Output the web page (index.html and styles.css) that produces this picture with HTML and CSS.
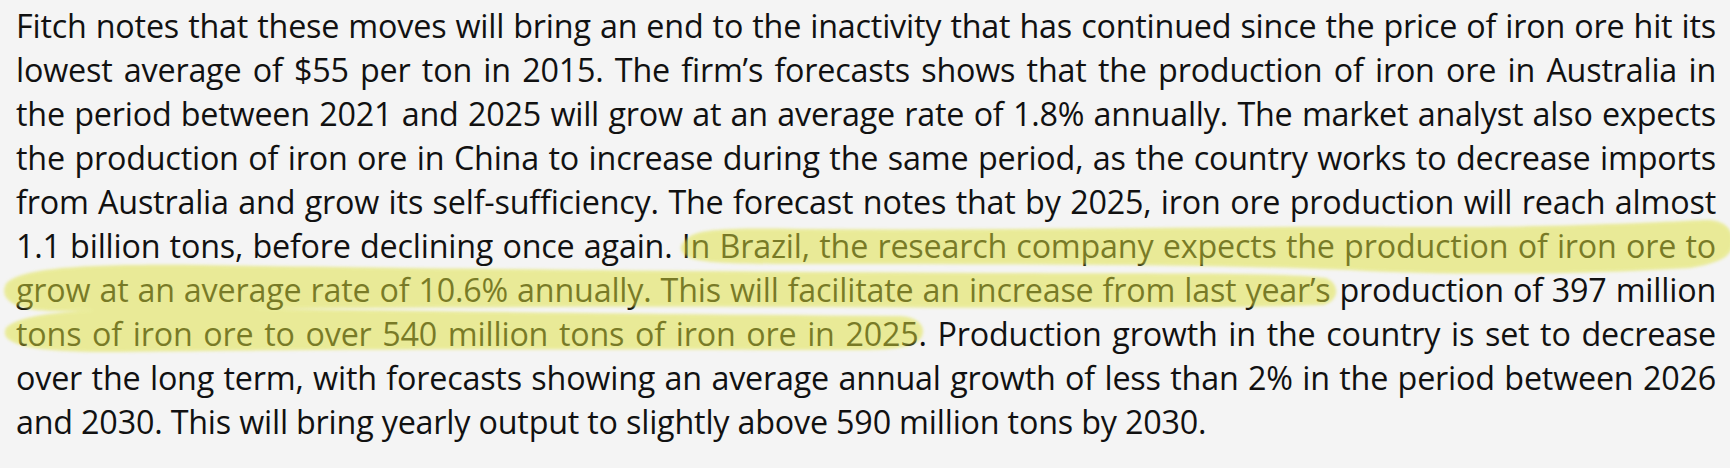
FILE: index.html
```html
<!DOCTYPE html>
<html lang="en">
<head>
<meta charset="utf-8">
<title>Iron ore forecast</title>
<link rel="stylesheet" href="styles.css">
</head>
<body>
<main class="panel">
  <div class="text">
    <p class="line">Fitch notes that these moves will bring an end to the inactivity that has continued since the price of iron ore hit its</p>
    <p class="line">lowest average of $55 per ton in 2015. The firm’s forecasts shows that the production of iron ore in Australia in</p>
    <p class="line">the period between 2021 and 2025 will grow at an average rate of 1.8% annually. The market analyst also expects</p>
    <p class="line">the production of iron ore in China to increase during the same period, as the country works to decrease imports</p>
    <p class="line">from Australia and grow its self-sufficiency. The forecast notes that by 2025, iron ore production will reach almost</p>
    <p class="line">1.1 billion tons, before declining once again. In Brazil, the research company expects the production of iron ore to</p>
    <p class="line">grow at an average rate of 10.6% annually. This will facilitate an increase from last year’s production of 397 million</p>
    <p class="line">tons of iron ore to over 540 million tons of iron ore in 2025. Production growth in the country is set to decrease</p>
    <p class="line">over the long term, with forecasts showing an average annual growth of less than 2% in the period between 2026</p>
    <p class="line last">and 2030. This will bring yearly output to slightly above 590 million tons by 2030.</p>
    <svg class="marker" width="1730" height="468" viewBox="0 0 1730 468" aria-hidden="true">
      <defs>
        <filter id="soft" x="-5%" y="-50%" width="110%" height="200%">
          <feGaussianBlur stdDeviation="1.8"/>
        </filter>
      </defs>
      <g class="ink" filter="url(#soft)" transform="translate(0 2)">
        <path d="M 688 236 C 698 226, 740 226, 800 227 C 1000 229, 1200 224, 1400 225 C 1550 226, 1660 220, 1705 218 C 1728 217, 1736 232, 1732 246 C 1728 258, 1712 262, 1690 266 C 1600 272, 1450 274, 1350 268 C 1200 262, 1000 262, 800 262 C 740 262, 700 262, 686 254 C 678 248, 680 242, 688 236 Z"/>
        <path d="M 6 282 C 20 266, 80 262, 200 263 C 400 266, 700 270, 1000 271 C 1150 272, 1285 270, 1326 276 C 1340 282, 1340 298, 1324 303 C 1200 307, 1000 306, 800 305 C 500 304, 250 307, 60 309 C 16 310, -2 298, 6 282 Z"/>
        <path d="M 6 326 C 20 310, 90 305, 220 306 C 420 309, 650 312, 900 314 C 918 315, 926 324, 922 334 C 918 344, 900 348, 860 348 C 650 348, 400 346, 120 350 C 30 351, -2 342, 6 326 Z"/>
      </g>
    </svg>
  </div>
</main>
</body>
</html>
```

FILE: styles.css
```css
html, body {
  margin: 0;
  padding: 0;
  background: #ffffff;
}

.panel {
  width: 1730px;
  height: 468px;
  background: #f4f4f4;
  overflow: hidden;
}

.text {
  position: relative;
  padding: 3px 14px 0 16px;
  font-family: "Open Sans", "Noto Sans", "Liberation Sans", sans-serif;
  font-size: 32.3px;
  letter-spacing: -0.2px;
  line-height: 44px;
  color: #111111;
}

.line {
  margin: 0;
  white-space: nowrap;
  text-align: justify;
  text-align-last: justify;
}

.line.last {
  text-align-last: left;
}

.marker {
  position: absolute;
  left: 0;
  top: 0;
  pointer-events: none;
}

.ink {
  fill: #dfe23c;
  opacity: 0.5;
}
```
